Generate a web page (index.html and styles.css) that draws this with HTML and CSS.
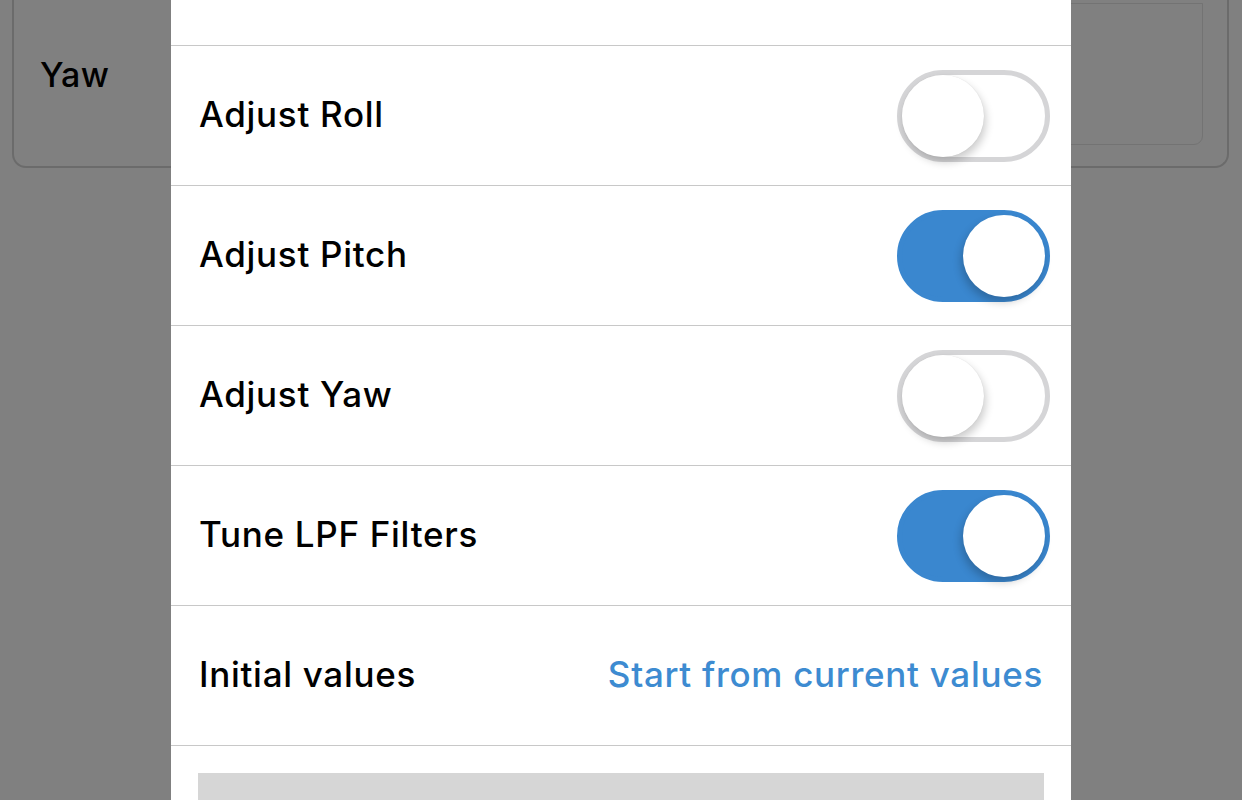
FILE: index.html
```html
<!DOCTYPE html>
<html lang="en">
<head>
    <meta charset="UTF-8">
    <meta name="viewport" content="width=device-width, initial-scale=1.0">
    <title>Autotune Settings</title>
    <link rel="stylesheet" href="styles.css">
</head>
<body>

    <!-- page behind the dimmed overlay -->
    <div class="page">
        <div class="axis-card">
            <div class="axis-label">Yaw</div>
            <div class="axis-box"></div>
        </div>
    </div>

    <!-- settings sheet -->
    <div class="sheet">
        <div class="sheet-top"></div>

        <div class="row">
            <span class="row-label">Adjust Roll</span>
            <label class="switch"><input type="checkbox"><span class="knob"></span></label>
        </div>
        <div class="row">
            <span class="row-label">Adjust Pitch</span>
            <label class="switch"><input type="checkbox" checked><span class="knob"></span></label>
        </div>
        <div class="row">
            <span class="row-label">Adjust Yaw</span>
            <label class="switch"><input type="checkbox"><span class="knob"></span></label>
        </div>
        <div class="row">
            <span class="row-label">Tune LPF Filters</span>
            <label class="switch"><input type="checkbox" checked><span class="knob"></span></label>
        </div>
        <div class="row">
            <span class="row-label">Initial values</span>
            <a class="row-link" href="#">Start from current values</a>
        </div>

        <div class="sheet-bottom">
            <div class="start-button"></div>
        </div>
    </div>

</body>
</html>
```

FILE: styles.css
```css
* {
    margin: 0;
    padding: 0;
    box-sizing: border-box;
}

body {
    font-family: 'Inter', 'Noto Sans', sans-serif;
    background-color: #808080;
    color: #000;
    height: 800px;
    overflow: hidden;
}

.page {
    padding: 0 13px 0 12px;
}

.axis-card {
    margin-top: -40px;
    height: 208px;
    border: 2px solid #6b6b6b;
    border-top: none;
    border-radius: 0 0 14px 14px;
    display: flex;
    padding: 0 24px 0 26px;
}

.axis-label {
    font-size: 34px;
    font-weight: 500;
    letter-spacing: 0.2px;
    padding-top: 94px;
    width: 400px;
}

.axis-box {
    flex: 1;
    margin-top: 43px;
    height: 142px;
    border: 1px solid #737373;
    border-radius: 0 0 9px 9px;
}

.sheet {
    position: absolute;
    top: 0;
    left: 171px;
    width: 900px;
    height: 800px;
    background-color: #ffffff;
}

.sheet-top {
    height: 46px;
    border-bottom: 1px solid #c8c8c8;
}

.row {
    height: 140px;
    border-bottom: 1px solid #c8c8c8;
    display: flex;
    align-items: center;
    justify-content: space-between;
    padding: 0 21px 0 28px;
}

.row-label,
.row-link {
    font-size: 35px;
    font-weight: 500;
    letter-spacing: 0.7px;
    margin-bottom: 3px;
}

.row-link {
    color: #3d8bd1;
    text-decoration: none;
    margin-right: 7px;
}

.switch {
    position: relative;
    width: 153px;
    height: 92px;
    cursor: pointer;
}

.switch input {
    display: none;
}

.switch .knob {
    position: absolute;
    inset: 0;
    border-radius: 46px;
    border: 5px solid #d5d5d7;
    background-color: #ffffff;
    transition: background-color 0.2s, border-color 0.2s;
}

.switch .knob::after {
    content: '';
    position: absolute;
    top: 0;
    left: 0;
    width: 82px;
    height: 82px;
    border-radius: 50%;
    background-color: #ffffff;
    box-shadow: 2px 5px 9px rgba(0, 0, 0, 0.2), 0 0 1px rgba(0, 0, 0, 0.12);
    transition: left 0.2s;
}

.switch input:checked + .knob {
    background-color: #3a87cf;
    border-color: #3a87cf;
}

.switch input:checked + .knob::after {
    left: 61px;
    box-shadow: -2px 5px 9px rgba(0, 0, 0, 0.22);
}

.sheet-bottom {
    padding: 27px 27px 0 27px;
}

.start-button {
    height: 60px;
    background-color: #d6d6d6;
}
```
